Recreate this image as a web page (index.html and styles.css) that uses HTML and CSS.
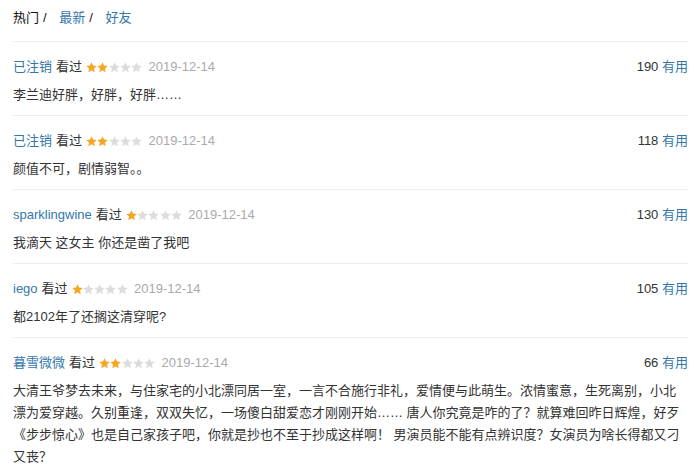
FILE: index.html
```html
<!DOCTYPE html>
<html lang="zh-CN">
<head>
    <meta charset="UTF-8">
    <title>短评</title>
    <link rel="stylesheet" href="styles.css">
</head>
<body>
    <svg class="defs" width="0" height="0">
        <symbol id="star" viewBox="0 0 24 24">
            <polygon points="12,0.5 15.4,7.7 23.5,8.6 17.5,14.1 19.1,22.3 12,18.2 4.9,22.3 6.5,14.1 0.5,8.6 8.6,7.7"/>
        </symbol>
    </svg>

    <div class="tabs">
        <span class="tab current">热门</span><span class="sep">/</span>
        <a class="tab" href="#">最新</a><span class="sep">/</span>
        <a class="tab" href="#">好友</a>
    </div>

    <div class="comments">
        <div class="comment">
            <div class="meta">
                <a class="user" href="#">已注销</a>
                <span class="watched">看过</span>
                <span class="stars" data-rating="2"></span>
                <span class="date">2019-12-14</span>
                <span class="votes"><span class="count">190</span> <a href="#">有用</a></span>
            </div>
            <p class="text">李兰迪好胖，好胖，好胖……</p>
        </div>
        <div class="comment">
            <div class="meta">
                <a class="user" href="#">已注销</a>
                <span class="watched">看过</span>
                <span class="stars" data-rating="2"></span>
                <span class="date">2019-12-14</span>
                <span class="votes"><span class="count">118</span> <a href="#">有用</a></span>
            </div>
            <p class="text">颜值不可，剧情弱智。。</p>
        </div>
        <div class="comment">
            <div class="meta">
                <a class="user" href="#">sparklingwine</a>
                <span class="watched">看过</span>
                <span class="stars" data-rating="1"></span>
                <span class="date">2019-12-14</span>
                <span class="votes"><span class="count">130</span> <a href="#">有用</a></span>
            </div>
            <p class="text">我滴天 这女主 你还是凿了我吧</p>
        </div>
        <div class="comment">
            <div class="meta">
                <a class="user" href="#">iego</a>
                <span class="watched">看过</span>
                <span class="stars" data-rating="1"></span>
                <span class="date">2019-12-14</span>
                <span class="votes"><span class="count">105</span> <a href="#">有用</a></span>
            </div>
            <p class="text">都2102年了还搁这清穿呢?</p>
        </div>
        <div class="comment">
            <div class="meta">
                <a class="user" href="#">暮雪微微</a>
                <span class="watched">看过</span>
                <span class="stars" data-rating="2"></span>
                <span class="date">2019-12-14</span>
                <span class="votes"><span class="count">66</span> <a href="#">有用</a></span>
            </div>
            <p class="text">大清王爷梦去未来，与住家宅的小北漂同居一室，一言不合施行非礼，爱情便与此萌生。浓情蜜意，生死离别，小北漂为爱穿越。久别重逢，双双失忆，一场傻白甜爱恋才刚刚开始…… 唐人你究竟是咋的了？就算难回昨日辉煌，好歹《步步惊心》也是自己家孩子吧，你就是抄也不至于抄成这样啊！ 男演员能不能有点辨识度？女演员为啥长得都又刁又丧？</p>
        </div>
    </div>

    <script src="stars.js"></script>
</body>
</html>
```

FILE: stars.js
```js
// 根据 data-rating 画出五颗星
document.querySelectorAll('.stars').forEach(function(el) {
    var rating = parseInt(el.getAttribute('data-rating'), 10);
    var html = '';
    for (var i = 0; i < 5; i++) {
        var cls = i < rating ? 'on' : 'off';
        html += '<svg class="star ' + cls + '" width="11" height="11"><use href="#star"/></svg>';
    }
    el.innerHTML = html;
});
```

FILE: styles.css
```css
body {
    font-family: Arial, "Liberation Sans", "Noto Sans CJK SC", sans-serif;
    font-size: 13px;
    color: #333;
    background-color: #fff;
    margin: 0;
    padding: 0 11px 0 13px;
}

a {
    color: #37a;
    text-decoration: none;
}

.defs {
    position: absolute;
}

.tabs {
    line-height: 20px;
    padding: 8px 0 13px;
    border-bottom: 1px solid #eee;
}

.tab.current {
    color: #111;
}

.sep {
    margin: 0 9px 0 4px;
    color: #111;
}

.comment {
    padding: 14px 0 9px;
    border-bottom: 1px solid #eee;
}

.comment:last-child {
    border-bottom: none;
}

.meta {
    display: flex;
    align-items: center;
    line-height: 22px;
}

.watched {
    margin-left: 4px;
    color: #333;
}

.stars {
    display: inline-flex;
    margin-left: 4px;
}

.star {
    display: block;
    margin-right: 0.3px;
}

.star.on {
    fill: #f5a623;
}

.star.off {
    fill: #ddd;
}

.date {
    margin-left: 6px;
    color: #aaa;
}

.votes {
    margin-left: auto;
}

.votes .count {
    color: #333;
}

.text {
    margin: 6px 0 0;
    line-height: 22px;
    color: #333;
    padding-right: 6px;
}
```
